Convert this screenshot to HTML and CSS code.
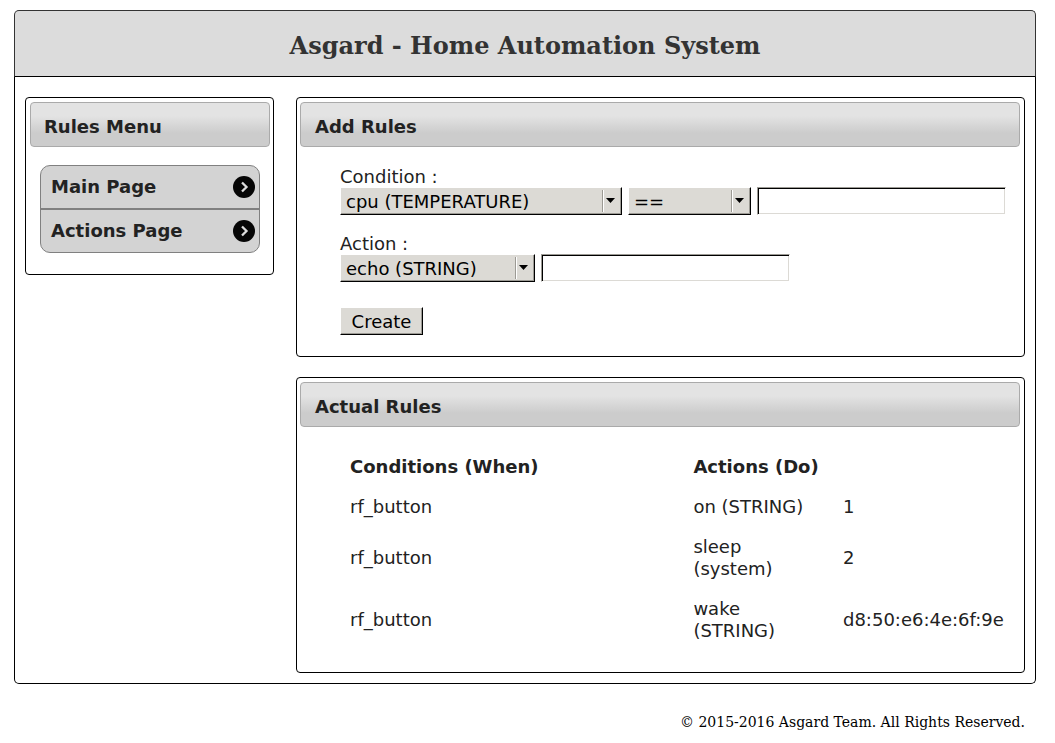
FILE: index.html
```html
<!DOCTYPE html>
<html lang="en">
<head>
<meta charset="utf-8">
<title>Asgard - Home Automation System</title>
<link rel="stylesheet" href="styles.css">
</head>
<body>
<div class="page">
  <header class="banner"><h1 class="banner-title">Asgard - Home Automation System</h1></header>
  <div class="content">
    <nav class="panel" aria-labelledby="menu-title">
      <h2 class="panel-title" id="menu-title">Rules Menu</h2>
      <ul class="menu">
        <li class="menu-item"><a class="menu-link" href="#main">Main Page
          <svg class="menu-icon" viewBox="0 0 22 22" aria-hidden="true"><circle cx="11" cy="11" r="11" fill="#060606"/><path d="M9 6.500L13.500 11L9 15.500" fill="none" stroke="#ddd" stroke-width="2.300"/></svg></a></li>
        <li class="menu-item"><a class="menu-link" href="#actions">Actions Page
          <svg class="menu-icon" viewBox="0 0 22 22" aria-hidden="true"><circle cx="11" cy="11" r="11" fill="#060606"/><path d="M9 6.500L13.500 11L9 15.500" fill="none" stroke="#ddd" stroke-width="2.300"/></svg></a></li>
      </ul>
    </nav>
    <main class="main">
      <section class="panel">
        <h2 class="panel-title">Add Rules</h2>
        <form class="rule-form">
          <div class="field">
            <label for="condition">Condition :</label>
            <div class="controls">
              <select class="control select select-wide" id="condition"><option>cpu (TEMPERATURE)</option></select>
              <select class="control select select-small" aria-label="Operator"><option>==</option></select>
              <input class="control text-input" type="text" aria-label="Condition value">
            </div>
          </div>
          <div class="field">
            <label for="action">Action :</label>
            <div class="controls">
              <select class="control select select-medium" id="action"><option>echo (STRING)</option></select>
              <input class="control text-input" type="text" aria-label="Action value">
            </div>
          </div>
          <button class="control create" type="button">Create</button>
        </form>
      </section>
      <section class="panel">
        <h2 class="panel-title">Actual Rules</h2>
        <div class="rules-wrap">
          <table class="rules">
            <colgroup><col class="col-condition"><col class="col-action"><col></colgroup>
            <thead><tr><th>Conditions (When)</th><th colspan="2">Actions (Do)</th></tr></thead>
            <tbody>
              <tr><td>rf_button</td><td>on (STRING)</td><td>1</td></tr>
              <tr><td>rf_button</td><td>sleep (system)</td><td>2</td></tr>
              <tr><td>rf_button</td><td>wake (STRING)</td><td>d8:50:e6:4e:6f:9e</td></tr>
            </tbody>
          </table>
        </div>
      </section>
    </main>
  </div>
</div>
<footer class="footer">© 2015-2016 Asgard Team. All Rights Reserved.</footer>
</body>
</html>
```
FILE: styles.css
```css
* { box-sizing: border-box; }

body {
  margin: 10px 19px 0 14px;
  background: #fff;
  color: #222;
  font: 18px/22px "DejaVu Sans", sans-serif;
}

.banner {
  padding: 19px 10px 14px;
  border: 1px solid #333;
  border-bottom-color: #000;
  border-radius: 5px 5px 0 0;
  background: #dcdcdc;
  text-align: center;
}

.banner-title {
  margin: 0;
  color: #333;
  font: bold 24px/32px "DejaVu Serif", serif;
}

.content {
  display: grid;
  grid-template-columns: 249px 1fr;
  align-items: start;
  gap: 22px;
  padding: 20px 10px 10px;
  border: 1px solid #000;
  border-top: 0;
  border-radius: 0 0 5px 5px;
}

.main {
  display: grid;
  gap: 20px;
}

.panel {
  min-width: 0;
  padding: 4px 4px 21px 3px;
  border: 1px solid #000;
  border-radius: 4px;
}

nav.panel { padding: 4px 3px 21px 4px; }

.panel-title {
  margin: 0;
  padding: 13px 14px 8px;
  border: 1px solid #aaa;
  border-radius: 4px;
  background: linear-gradient(#e3e3e3, #e3e3e3 30%, #ccc 70%);
  font-size: 18px;
  line-height: 22px;
}

nav .panel-title { padding-left: 13px; }

.menu {
  margin: 18px 10px 0;
  padding: 0;
  overflow: hidden;
  border: 1px solid #808080;
  border-radius: 10px;
  background: #d3d3d3;
  list-style: none;
}

.menu-item + .menu-item { border-top: 2px solid #808080; }

.menu-link {
  display: flex;
  align-items: center;
  justify-content: space-between;
  height: 42px;
  padding: 0 4px 0 10px;
  color: #222;
  font-weight: bold;
  line-height: 24px;
  text-decoration: none;
}

.menu-icon {
  width: 22px;
  height: 22px;
}

.rule-form { padding: 18px 10px 0 40px; }

.field { margin-bottom: 17px; }

.field label {
  display: block;
  height: 22px;
  line-height: 24px;
}

.controls {
  display: flex;
  gap: 6px;
}

.control {
  height: 28px;
  margin: 0;
  border: 1px solid #fff;
  border-radius: 0;
  color: #000;
  font: 18px/22px "DejaVu Sans", sans-serif;
}

.select,
.create {
  appearance: none;
  border-right-color: #000;
  border-bottom-color: #000;
  background-color: #dcdad5;
  box-shadow: inset -1px -1px #9c9a94;
}

.select {
  padding: 2px 20px 0 5px;
  background-image: url("data:image/svg+xml,%3Csvg xmlns='http://www.w3.org/2000/svg' width='19' height='22'%3E%3Cpath d='M0 0h1v22H0z' fill='%239c9a94'/%3E%3Cpath d='M1 0h1v22H1z' fill='%23fff'/%3E%3Cpath d='M4 8h9L8.500 13z'/%3E%3C/svg%3E");
  background-position: right 2px;
  background-repeat: no-repeat;
}

.select-wide { width: 282px; }
.select-medium { width: 195px; }
.select-small { width: 123px; }

.text-input {
  width: 249px;
  min-width: 0;
  padding: 0 5px;
  border-top-color: #9c9a94;
  border-left-color: #9c9a94;
  background: #fff;
  box-shadow: inset 1px 1px #000, inset -1px -1px #dcdad5;
}

.create {
  display: block;
  width: 83px;
  margin-top: 25px;
  padding: 2px 0 0;
}

.rules-wrap { padding: 20px 0 0 40px; }

.rules {
  width: 100%;
  border-collapse: collapse;
  table-layout: fixed;
}

.rules th,
.rules td {
  padding: 9px 10px;
  text-align: left;
  vertical-align: middle;
}

.rules td:last-child { padding-right: 0; }

.col-condition { width: 50.5%; }
.col-action { width: 22%; }

.footer {
  padding: 28px 11px 0;
  color: #000;
  font: 14px/20px "DejaVu Serif", serif;
  text-align: right;
}
```
